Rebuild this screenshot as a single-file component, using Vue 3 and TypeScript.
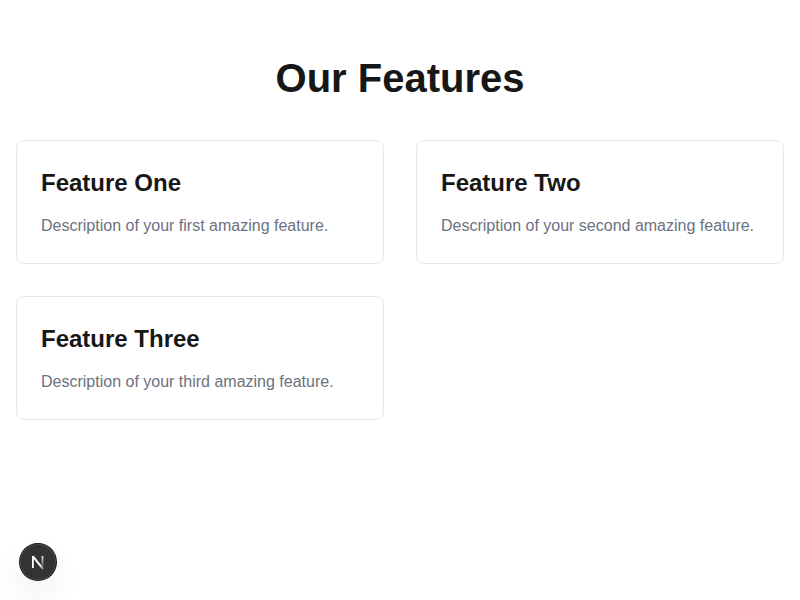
<script setup lang="ts">
interface Feature {
  title: string
  description: string
}

const features: Feature[] = [
  { title: 'Feature One', description: 'Description of your first amazing feature.' },
  { title: 'Feature Two', description: 'Description of your second amazing feature.' },
  { title: 'Feature Three', description: 'Description of your third amazing feature.' },
]
</script>

<template>
  <main class="page">
    <h1 class="heading">Our Features</h1>
    <section class="grid">
      <article v-for="feature in features" :key="feature.title" class="card">
        <h2 class="title">{{ feature.title }}</h2>
        <p class="text">{{ feature.description }}</p>
      </article>
    </section>
    <button class="badge" type="button">
      <svg class="mark" viewBox="0 0 36 36" fill="none" aria-hidden="true">
        <defs>
          <linearGradient id="diag" x1="17" y1="17" x2="24" y2="25" gradientUnits="userSpaceOnUse">
            <stop offset="0.5" stop-color="#fff" />
            <stop offset="1" stop-color="#fff" stop-opacity="0.3" />
          </linearGradient>
          <linearGradient id="stem" x1="22" y1="12" x2="22" y2="24" gradientUnits="userSpaceOnUse">
            <stop stop-color="#fff" stop-opacity="0.9" />
            <stop offset="1" stop-color="#fff" stop-opacity="0.1" />
          </linearGradient>
        </defs>
        <path d="M12 12H14L24 24.8L22.2 25.6L13.8 14.9V24H12Z" fill="url(#diag)" />
        <path d="M21.6 12H23.4V23.6L21.6 21.6Z" fill="url(#stem)" />
      </svg>
    </button>
  </main>
</template>

<style>
body {
  background: #fff;
}
</style>

<style scoped>
.page {
  max-width: 1280px;
  margin: 0 auto;
  padding: 56px 16px 64px;
  box-sizing: border-box;
  font-family: "Liberation Sans", Arial, sans-serif;
  color: #171717;
}
.heading {
  margin: 0 0 40px;
  font-size: 40px;
  line-height: 44px;
  font-weight: 700;
  text-align: center;
}
.grid {
  display: grid;
  grid-template-columns: repeat(2, minmax(0, 1fr));
  gap: 32px;
}
.card {
  padding: 24px;
  border: 1px solid #e5e7eb;
  border-radius: 8px;
}
.title {
  margin: 0 0 12px;
  font-size: 24px;
  line-height: 36px;
  font-weight: 700;
}
.text {
  margin: 0;
  font-size: 16px;
  line-height: 26px;
  color: #6b7280;
}
.badge {
  position: fixed;
  left: 20px;
  bottom: 20px;
  width: 36px;
  height: 36px;
  padding: 0;
  border: 0;
  border-radius: 50%;
  background: #333;
  box-shadow: 0 0 0 1px #171717, inset 0 0 0 1px #474747, 0 16px 32px 0 rgba(0, 0, 0, 0.07);
}
.mark {
  display: block;
  width: 36px;
  height: 36px;
}
</style>
